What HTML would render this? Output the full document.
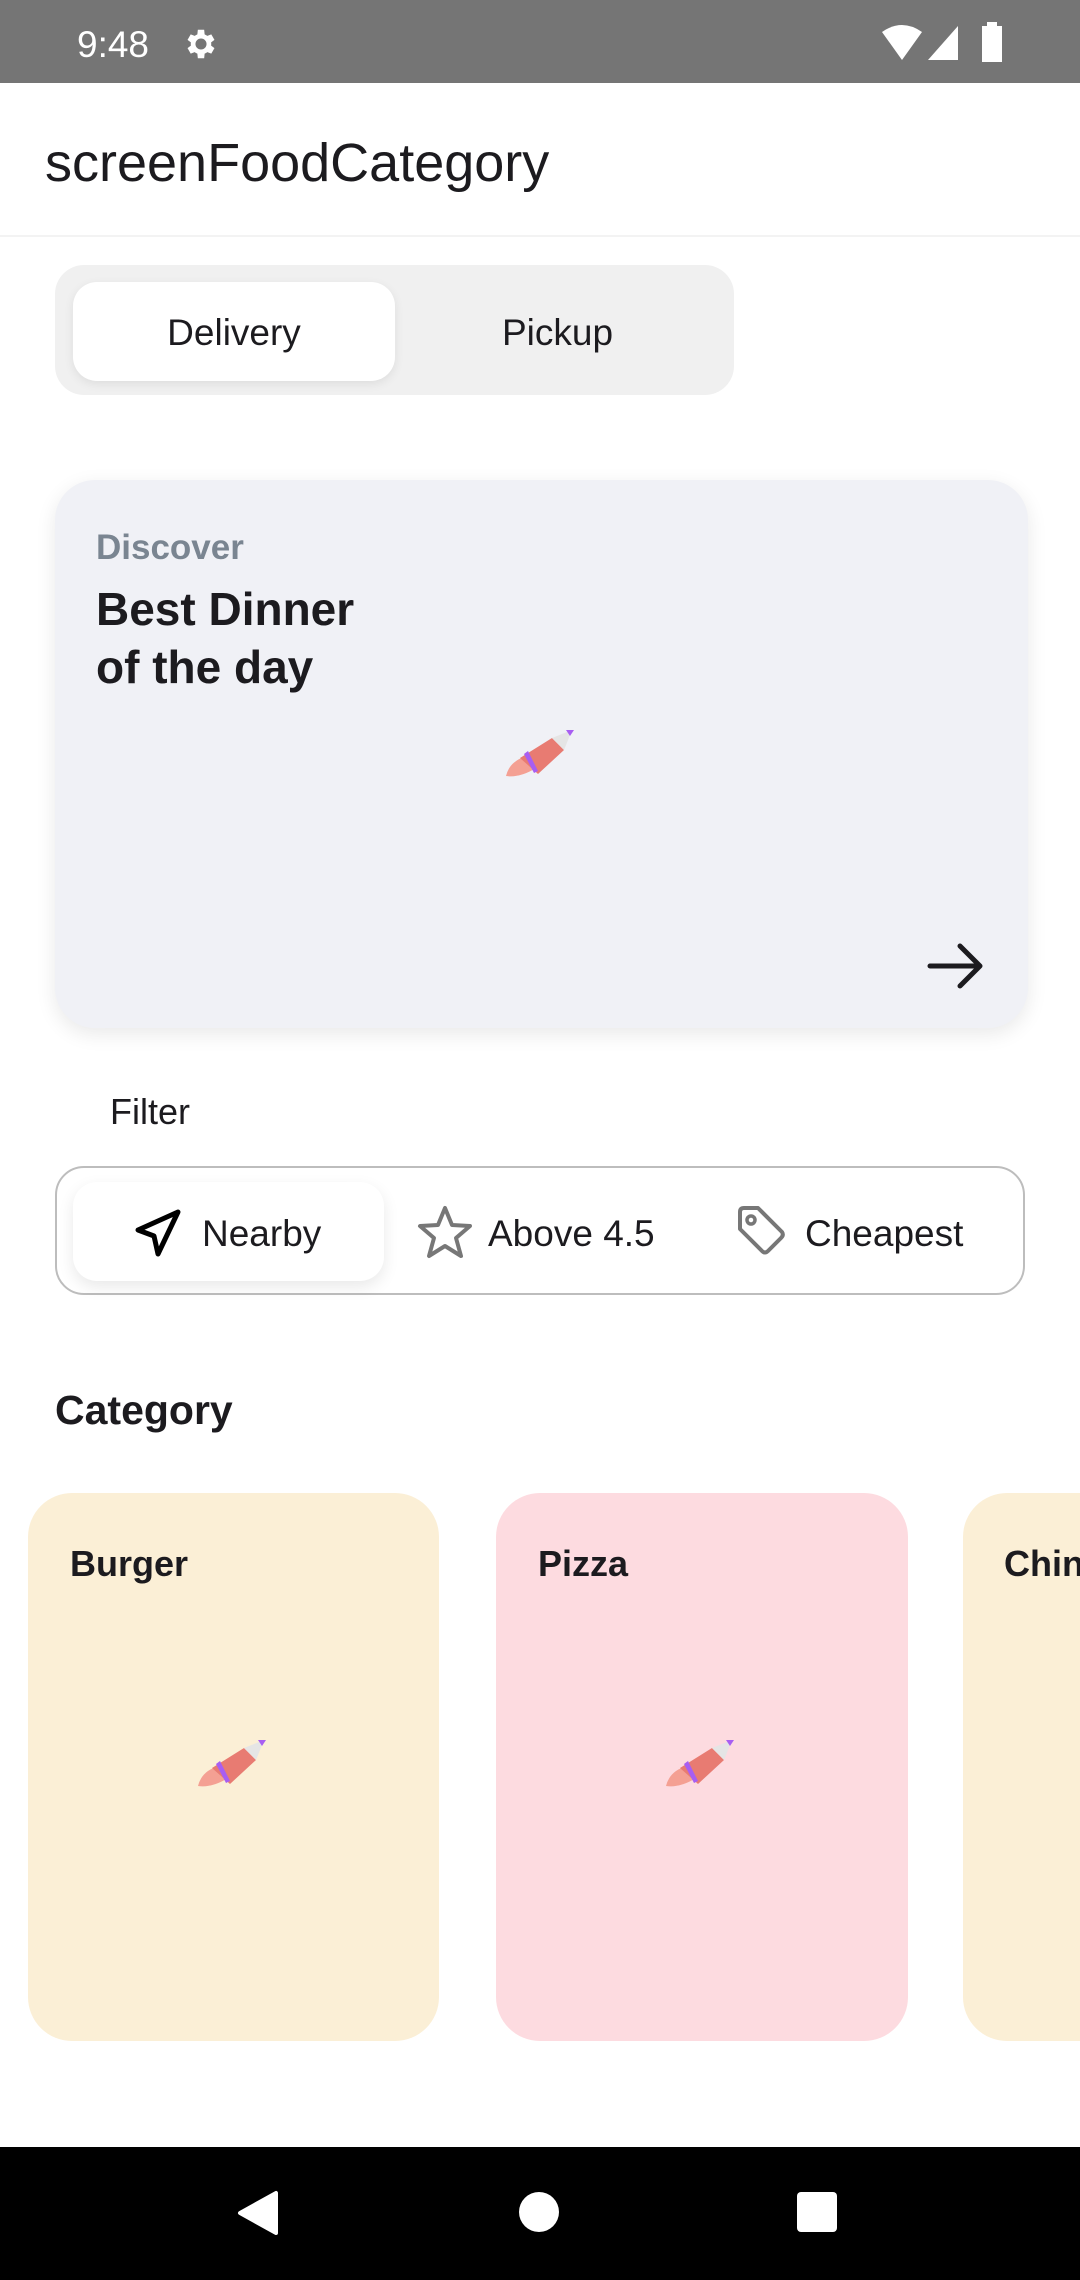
<!DOCTYPE html>
<html><head><meta charset="utf-8"><style>
*{margin:0;padding:0;box-sizing:border-box}
body{width:1080px;height:2280px;position:relative;overflow:hidden;background:#fff;font-family:"Liberation Sans",Roboto,sans-serif;color:#1c1b1f}
.abs{position:absolute}
.t{position:absolute;white-space:nowrap;line-height:1}
</style></head><body>
<div class="abs" style="left:0;top:0;width:1080px;height:83px;background:#757575"></div>
<div class="t" style="left:77px;top:26px;font-size:37px;color:#fff">9:48</div>
<svg class="abs" style="left:182px;top:25px" width="38" height="38" viewBox="0 0 24 24"><path fill="#fff" d="M19.4 13a7.5 7.5 0 0 0 0-2l2.1-1.6-2-3.5-2.5 1a7 7 0 0 0-1.700-1L15 3h-4l-.3 2.9a7 7 0 0 0-1.700 1l-2.500-1-2 3.500L6.600 11a7.500 7.500 0 0 0 0 2l-2.100 1.600 2 3.500 2.500-1a7 7 0 0 0 1.700 1L11 21h4l.3-2.900a7 7 0 0 0 1.700-1l2.500 1 2-3.500zM13 15.500a3.500 3.500 0 1 1 0-7 3.500 3.500 0 0 1 0 7z" transform="translate(-1 0)"/></svg>
<svg class="abs" style="left:880px;top:24px" width="44" height="38" viewBox="0 0 44 38"><path fill="#fff" d="M2 8Q22-6 42 8L22 36z"/></svg>
<svg class="abs" style="left:926px;top:24px" width="34" height="38" viewBox="0 0 34 38"><path fill="#fff" d="M32 2V36H2z"/></svg>
<svg class="abs" style="left:980px;top:22px" width="24" height="40" viewBox="0 0 24 40"><path fill="#fff" d="M7 0h10v4h5v36H2V4h5z"/></svg>

<div class="abs" style="left:0;top:235px;width:1080px;height:2px;background:#f3f3f3"></div>
<div class="t" style="left:45px;top:136px;font-size:54px">screenFoodCategory</div>

<div class="abs" style="left:55px;top:265px;width:679px;height:130px;background:#f0f0f0;border-radius:29px"></div>
<div class="abs" style="left:73px;top:282px;width:322px;height:99px;background:#fff;border-radius:24px;box-shadow:0 3px 10px rgba(0,0,0,.08)"></div>
<div class="t" style="left:73px;width:322px;text-align:center;top:314px;font-size:37px">Delivery</div>
<div class="t" style="left:395px;width:325px;text-align:center;top:314px;font-size:37px">Pickup</div>

<div class="abs" style="left:55px;top:480px;width:973px;height:548px;background:#f0f1f6;border-radius:40px;box-shadow:0 6px 20px rgba(0,0,0,.09)"></div>
<div class="t" style="left:96px;top:530px;font-size:35px;font-weight:bold;color:#7a8591">Discover</div>
<div class="t" style="left:96px;top:580px;font-size:46px;font-weight:bold;line-height:58px">Best Dinner<br>of the day</div>
<svg class="abs" style="left:506px;top:730px" width="74" height="50" viewBox="0 0 74 50"><path fill="#f4a093" d="M0 46Q4 30 22 26L30 38Q14 48 0 46z"/><path fill="#e87b72" d="M14 28L46 8 58 20 32 44z"/><path fill="#a85ef2" d="M18 24l4-3 10 20-4 2z"/><path fill="#e5e5e5" d="M46 8L66 0 58 20z"/><path fill="#a85ef2" d="M60 0h8l-4 6z"/></svg>
<svg class="abs" style="left:926px;top:942px" width="60" height="48" viewBox="0 0 60 48"><path d="M4 24H54M34 4L54 24 34 44" fill="none" stroke="#1c1b1f" stroke-width="5" stroke-linecap="round" stroke-linejoin="round"/></svg>

<div class="t" style="left:110px;top:1094px;font-size:36px">Filter</div>
<div class="abs" style="left:55px;top:1166px;width:970px;height:129px;border:2px solid #bdbdbd;border-radius:29px"></div>
<div class="abs" style="left:73px;top:1182px;width:311px;height:99px;background:#fff;border-radius:24px;box-shadow:0 6px 16px rgba(0,0,0,.09)"></div>
<svg class="abs" style="left:134px;top:1208px" width="48" height="50" viewBox="0 0 48 50"><path d="M44 4L4 22 20 28 24 46z" fill="none" stroke="#000" stroke-width="5" stroke-linejoin="round"/></svg>
<div class="t" style="left:202px;top:1215px;font-size:37px">Nearby</div>
<svg class="abs" style="left:416px;top:1204px" width="58" height="56" viewBox="0 0 58 56"><path d="M29 4l7 17 18 1-14 12 5 18-16-10-16 10 5-18L4 22l18-1z" fill="none" stroke="#777" stroke-width="4" stroke-linejoin="round"/></svg>
<div class="t" style="left:488px;top:1215px;font-size:37px">Above 4.5</div>
<svg class="abs" style="left:734px;top:1204px" width="54" height="54" viewBox="0 0 54 54"><path d="M6 8Q6 4 10 4H24L48 28Q50 31 47 34L34 47Q31 50 28 47L6 25z" fill="none" stroke="#777" stroke-width="4" stroke-linejoin="round"/><circle cx="17" cy="16" r="4" fill="none" stroke="#777" stroke-width="3.5"/></svg>
<div class="t" style="left:805px;top:1215px;font-size:37px">Cheapest</div>

<div class="t" style="left:55px;top:1390px;font-size:41px;font-weight:bold">Category</div>

<div class="abs" style="left:28px;top:1493px;width:411px;height:548px;background:#fbefd6;border-radius:44px"></div>
<div class="t" style="left:70px;top:1546px;font-size:36px;font-weight:bold">Burger</div>
<svg class="abs" style="left:198px;top:1740px" width="74" height="50" viewBox="0 0 74 50"><path fill="#f4a093" d="M0 46Q4 30 22 26L30 38Q14 48 0 46z"/><path fill="#e87b72" d="M14 28L46 8 58 20 32 44z"/><path fill="#a85ef2" d="M18 24l4-3 10 20-4 2z"/><path fill="#e5e5e5" d="M46 8L66 0 58 20z"/><path fill="#a85ef2" d="M60 0h8l-4 6z"/></svg>
<div class="abs" style="left:496px;top:1493px;width:412px;height:548px;background:#fddbe0;border-radius:44px"></div>
<div class="t" style="left:538px;top:1546px;font-size:36px;font-weight:bold">Pizza</div>
<svg class="abs" style="left:666px;top:1740px" width="74" height="50" viewBox="0 0 74 50"><path fill="#f4a093" d="M0 46Q4 30 22 26L30 38Q14 48 0 46z"/><path fill="#e87b72" d="M14 28L46 8 58 20 32 44z"/><path fill="#a85ef2" d="M18 24l4-3 10 20-4 2z"/><path fill="#e5e5e5" d="M46 8L66 0 58 20z"/><path fill="#a85ef2" d="M60 0h8l-4 6z"/></svg>
<div class="abs" style="left:963px;top:1493px;width:117px;height:548px;background:#fbefd6;border-radius:44px 0 0 44px;overflow:hidden"><div class="t" style="left:41px;top:53px;font-size:36px;font-weight:bold">Chinese</div></div>

<div class="abs" style="left:0;top:2147px;width:1080px;height:133px;background:#000"></div>
<svg class="abs" style="left:236px;top:2190px" width="44" height="46" viewBox="0 0 44 46"><path d="M40 3V43L4 23z" fill="#fff" stroke="#fff" stroke-width="4" stroke-linejoin="round"/></svg>
<div class="abs" style="left:519px;top:2192px;width:40px;height:40px;border-radius:50%;background:#fff"></div>
<div class="abs" style="left:797px;top:2192px;width:40px;height:40px;border-radius:4px;background:#fff"></div>
</body></html>
